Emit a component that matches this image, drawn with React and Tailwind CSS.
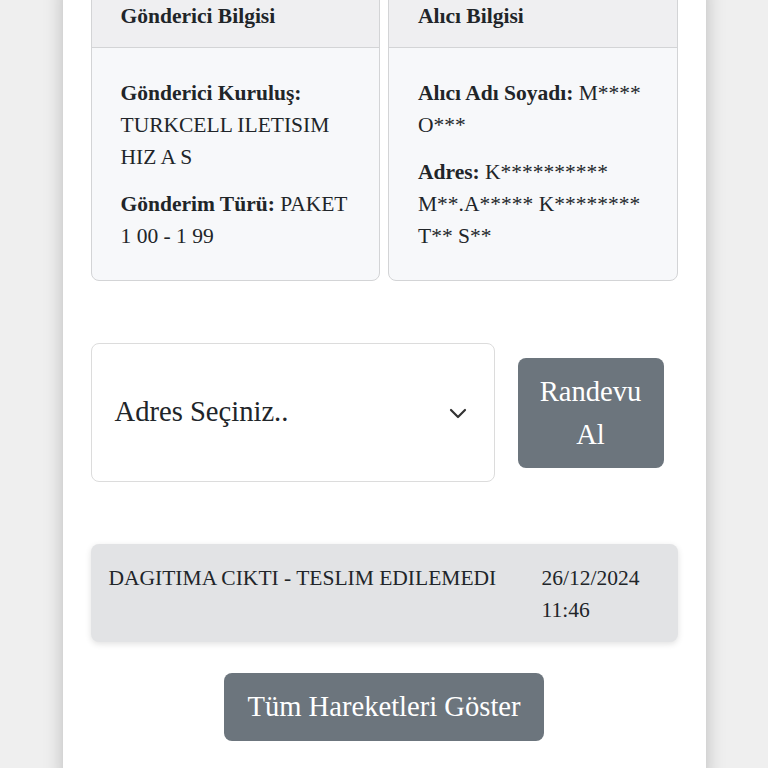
export default function App() {
  return (
    <div className="min-h-[768px] w-full bg-[#efefef] overflow-hidden font-['Liberation_Serif','Times_New_Roman',serif]">
      <div className="mx-auto w-[643px] min-h-[800px] bg-white shadow-[0_0_18px_rgba(0,0,0,0.22)] px-[28px] text-[#212529]">
        <div className="flex gap-[8px] mt-[-16px]">
          <div className="w-[290px] rounded-[8px] border border-[#d3d4d6] bg-[#f7f8fa] overflow-hidden">
            <div className="bg-[#efeff1] border-b border-[#d3d4d6] px-[29px] pt-[15px] pb-[15px] text-[21.5px] leading-[32px] font-bold">
              Gönderici Bilgisi
            </div>
            <div className="px-[29px] pt-[29px] pb-[28px] text-[21.5px] leading-[32px]">
              <p><b>Gönderici Kuruluş:</b> TURKCELL ILETISIM HIZ A S</p>
              <p className="mt-[15px]"><b>Gönderim Türü:</b> PAKET 1 00 - 1 99</p>
            </div>
          </div>
          <div className="w-[290px] rounded-[8px] border border-[#d3d4d6] bg-[#f7f8fa] overflow-hidden">
            <div className="bg-[#efeff1] border-b border-[#d3d4d6] px-[29px] pt-[15px] pb-[15px] text-[21.5px] leading-[32px] font-bold">
              Alıcı Bilgisi
            </div>
            <div className="px-[29px] pt-[29px] pb-[28px] text-[21.5px] leading-[32px]">
              <p><b>Alıcı Adı Soyadı:</b> M**** O***</p>
              <p className="mt-[15px]"><b>Adres:</b> K********** M**.A***** K******** T** S**</p>
            </div>
          </div>
        </div>

        <div className="flex items-center gap-[23px] mt-[62px]">
          <div className="w-[404px] h-[139px] rounded-[8px] border border-[#dcdcdc] bg-white flex items-center justify-between pl-[23px] pr-[27px] text-[28.6px]">
            <span>Adres Seçiniz..</span>
            <svg width="18" height="12" viewBox="0 0 18 12" fill="none">
              <path d="M2 3l7 7 7-7" stroke="#333" strokeWidth="2.2" strokeLinecap="round" strokeLinejoin="round" />
            </svg>
          </div>
          <button className="w-[146px] h-[110px] rounded-[8px] bg-[#6c757d] text-white text-[28.6px] leading-[43px] px-[12px]">
            Randevu Al
          </button>
        </div>

        <div className="mt-[62px] rounded-[8px] bg-[#e2e3e5] shadow-[0_2px_6px_rgba(0,0,0,0.12)] flex pl-[18px] pr-[18px] pt-[18px] pb-[16px] text-[21.5px] leading-[32px]">
          <div className="flex-1">DAGITIMA CIKTI - TESLIM EDILEMEDI</div>
          <div className="w-[118px]">26/12/2024<br />11:46</div>
        </div>

        <div className="flex justify-center mt-[31px]">
          <button className="h-[68px] w-[320px] rounded-[8px] bg-[#6c757d] text-white text-[28.6px] leading-[42px]">
            Tüm Hareketleri Göster
          </button>
        </div>
      </div>
    </div>
  );
}
